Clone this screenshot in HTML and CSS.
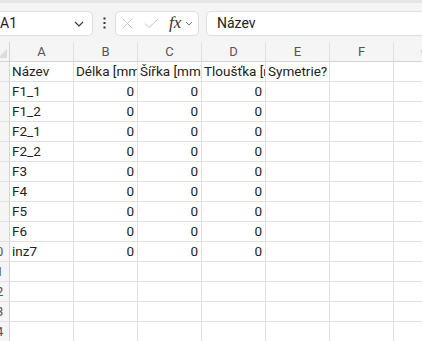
FILE: index.html
```html
<html>
    <head>
        <link rel="stylesheet" href="styles.css">
        <title>Sešit1</title>
    </head>
    <body>
        <div class="formula-bar">
            <div class="name-box">
                <span class="name-text">A1</span>
                <svg class="chev" width="10" height="6" viewBox="0 0 10 6"><path d="M1 1 L5 5 L9 1" fill="none" stroke="#333" stroke-width="1.1"/></svg>
            </div>
            <div class="dots">
                <svg width="3" height="12" viewBox="0 0 3 12"><rect x="0.5" y="0.5" width="2" height="2" fill="#333"/><rect x="0.5" y="5" width="2" height="2" fill="#333"/><rect x="0.5" y="9.5" width="2" height="2" fill="#333"/></svg>
            </div>
            <div class="fx-box">
                <svg width="11" height="11" viewBox="0 0 11 11"><path d="M1 1 L10 10 M10 1 L1 10" stroke="#c4c4c4" stroke-width="1"/></svg>
                <svg class="check" width="15" height="11" viewBox="0 0 15 11"><path d="M1 5.5 L5 9.5 L14 1" fill="none" stroke="#c4c4c4" stroke-width="1"/></svg>
                <span class="fx">fx</span>
                <svg class="chev-small" width="8" height="5" viewBox="0 0 8 5"><path d="M1 1 L4 4 L7 1" fill="none" stroke="#777" stroke-width="1"/></svg>
            </div>
            <div class="formula-input">Název</div>
        </div>

        <div class="sheet">
            <div class="head corner"><span class="tri"></span></div>
            <div class="head">A</div><div class="head">B</div><div class="head">C</div><div class="head">D</div><div class="head">E</div><div class="head">F</div><div class="head">G</div>

            <div class="rowhead">1</div>
            <div class="cell">Název</div><div class="cell">Délka [mm]</div><div class="cell">Šířka [mm]</div><div class="cell">Tloušťka [mm]</div><div class="cell">Symetrie?</div><div class="cell"></div><div class="cell"></div>

            <div class="rowhead">2</div>
            <div class="cell">F1_1</div><div class="cell num">0</div><div class="cell num">0</div><div class="cell num">0</div><div class="cell"></div><div class="cell"></div><div class="cell"></div>
            <div class="rowhead">3</div>
            <div class="cell">F1_2</div><div class="cell num">0</div><div class="cell num">0</div><div class="cell num">0</div><div class="cell"></div><div class="cell"></div><div class="cell"></div>
            <div class="rowhead">4</div>
            <div class="cell">F2_1</div><div class="cell num">0</div><div class="cell num">0</div><div class="cell num">0</div><div class="cell"></div><div class="cell"></div><div class="cell"></div>
            <div class="rowhead">5</div>
            <div class="cell">F2_2</div><div class="cell num">0</div><div class="cell num">0</div><div class="cell num">0</div><div class="cell"></div><div class="cell"></div><div class="cell"></div>
            <div class="rowhead">6</div>
            <div class="cell">F3</div><div class="cell num">0</div><div class="cell num">0</div><div class="cell num">0</div><div class="cell"></div><div class="cell"></div><div class="cell"></div>
            <div class="rowhead">7</div>
            <div class="cell">F4</div><div class="cell num">0</div><div class="cell num">0</div><div class="cell num">0</div><div class="cell"></div><div class="cell"></div><div class="cell"></div>
            <div class="rowhead">8</div>
            <div class="cell">F5</div><div class="cell num">0</div><div class="cell num">0</div><div class="cell num">0</div><div class="cell"></div><div class="cell"></div><div class="cell"></div>
            <div class="rowhead">9</div>
            <div class="cell">F6</div><div class="cell num">0</div><div class="cell num">0</div><div class="cell num">0</div><div class="cell"></div><div class="cell"></div><div class="cell"></div>
            <div class="rowhead">10</div>
            <div class="cell">inz7</div><div class="cell num">0</div><div class="cell num">0</div><div class="cell num">0</div><div class="cell"></div><div class="cell"></div><div class="cell"></div>
            <div class="rowhead">11</div>
            <div class="cell"></div><div class="cell"></div><div class="cell"></div><div class="cell"></div><div class="cell"></div><div class="cell"></div><div class="cell"></div>
            <div class="rowhead">12</div>
            <div class="cell"></div><div class="cell"></div><div class="cell"></div><div class="cell"></div><div class="cell"></div><div class="cell"></div><div class="cell"></div>
            <div class="rowhead">13</div>
            <div class="cell"></div><div class="cell"></div><div class="cell"></div><div class="cell"></div><div class="cell"></div><div class="cell"></div><div class="cell"></div>
            <div class="rowhead">14</div>
            <div class="cell"></div><div class="cell"></div><div class="cell"></div><div class="cell"></div><div class="cell"></div><div class="cell"></div><div class="cell"></div>
        </div>
    </body>
</html>
```

FILE: styles.css
```css
body {
    margin: 0;
    overflow: hidden;
    background-color: #ffffff;
    font-family: Roboto, 'Liberation Sans', sans-serif;
    color: #222222;
}

.formula-bar {
    display: flex;
    align-items: center;
    height: 42px;
    border-top: 3px solid #e6e6e6;
    background-color: #f4f4f4;
    padding-top: 1px;
    box-sizing: border-box;
}

.name-box {
    display: flex;
    align-items: center;
    justify-content: space-between;
    width: 103px;
    height: 25px;
    margin-left: -10px;
    padding-left: 10px;
    padding-right: 8px;
    box-sizing: border-box;
    background-color: #ffffff;
    border: 1px solid #dedede;
    border-radius: 5px;
    font-size: 14px;
}

.name-text {
    margin-left: -1px;
}

.chev {
    margin-top: 1px;
}

.dots {
    display: flex;
    width: 22px;
    justify-content: center;
}

.fx-box {
    display: flex;
    align-items: center;
    width: 84px;
    height: 25px;
    box-sizing: border-box;
    padding-left: 6px;
    background-color: #ffffff;
    border: 1px solid #dedede;
    border-radius: 5px;
}

.check {
    margin-left: 11px;
}

.fx {
    margin-left: 10px;
    font-family: 'Liberation Serif', serif;
    font-style: italic;
    font-size: 17px;
    color: #333333;
    line-height: 1;
    margin-top: -2px;
}

.chev-small {
    margin-left: 4px;
}

.formula-input {
    flex: 1;
    height: 25px;
    margin-left: 7px;
    margin-right: -10px;
    padding-left: 10px;
    box-sizing: border-box;
    background-color: #ffffff;
    border: 1px solid #dedede;
    border-radius: 5px;
    font-size: 14px;
    line-height: 23px;
}

.sheet {
    display: grid;
    grid-template-columns: 27px repeat(7, 64px);
    grid-auto-rows: 20px;
    margin-left: -17px;
    font-size: 13.5px;
}

.head,
.rowhead,
.cell {
    box-sizing: border-box;
    border-right: 1px solid #e1e1e1;
    border-bottom: 1px solid #e1e1e1;
    white-space: nowrap;
    overflow: hidden;
    line-height: 19px;
}

.cell {
    padding: 0 2px;
}

.cell.num {
    text-align: right;
    padding-right: 3px;
}

.head {
    background-color: #f5f5f5;
    color: #555555;
    text-align: center;
    font-size: 13px;
    border-bottom-color: #d5d5d5;
}

.rowhead {
    background-color: #f5f5f5;
    color: #555555;
    text-align: center;
    font-size: 13px;
    border-right-color: #d5d5d5;
}

.corner {
    position: relative;
    border-right-color: #d5d5d5;
}

.tri {
    position: absolute;
    right: 2px;
    bottom: 3px;
    width: 0;
    height: 0;
    border-left: 9px solid transparent;
    border-bottom: 9px solid #dcdcdc;
}
```
